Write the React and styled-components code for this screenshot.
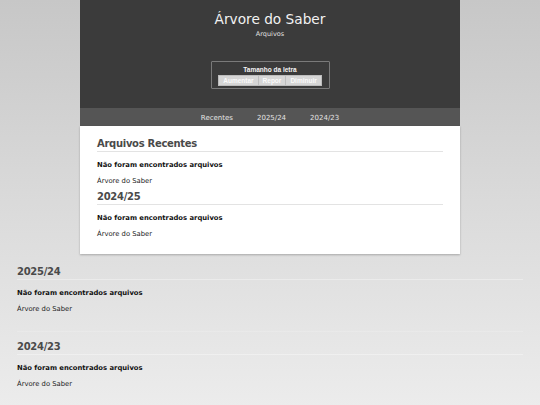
import React from "react";
import styled, { createGlobalStyle } from "styled-components";

const GlobalStyle = createGlobalStyle`
  html, body {
    margin: 0;
    padding: 0;
  }
  body {
    min-height: 405px;
    background: linear-gradient(to bottom, #c7c7c7 0%, #dcdcdc 55%, #ececec 100%);
    font-family: "DejaVu Sans", Verdana, sans-serif;
    color: #111;
  }
`;

const Page = styled.div`
  width: 100%;
  min-height: 405px;
`;

const Wrapper = styled.div`
  width: 380px;
  margin: 0 auto;
`;

const Header = styled.header`
  background: #3b3b3b;
  height: 108px;
  display: flex;
  flex-direction: column;
  align-items: center;
  padding-top: 11px;
  box-sizing: border-box;
`;

const Title = styled.h1`
  margin: 0;
  font-size: 13.7px;
  font-weight: normal;
  color: #f2f2f2;
  line-height: 17px;
`;

const Subtitle = styled.div`
  font-size: 6.5px;
  color: #e0e0e0;
  margin-top: 2px;
  line-height: 9px;
`;

const FontBox = styled.div`
  margin-top: 22px;
  border: 1px solid #7a7a7a;
  border-radius: 1px;
  padding: 3px 6px 2px;
  width: 119px;
  height: 28px;
  box-sizing: border-box;
  display: flex;
  flex-direction: column;
  align-items: center;
`;

const FontBoxLabel = styled.div`
  font-family: "Liberation Sans", Arial, sans-serif;
  font-weight: bold;
  font-size: 6.5px;
  color: #f4f4f4;
  line-height: 9px;
`;

const ButtonRow = styled.div`
  display: flex;
  margin-top: 1px;
`;

const SizeButton = styled.button`
  font-family: "Liberation Sans", Arial, sans-serif;
  font-weight: bold;
  font-size: 6.5px;
  color: #fafafa;
  background: #d6d6d6;
  border: 1px solid #bdbdbd;
  border-left-width: ${(p) => (p.$first ? "1px" : "0")};
  padding: 1px 4px;
  height: 11px;
  line-height: 8px;
  cursor: pointer;
`;

const Nav = styled.nav`
  background: #555555;
  height: 18px;
  box-sizing: border-box;
  padding-top: 2px;
  display: flex;
  justify-content: center;
  align-items: center;
  gap: 24px;
`;

const NavLink = styled.a`
  font-size: 7px;
  color: #e4e4e4;
  text-decoration: none;
`;

const Content = styled.main`
  background: #ffffff;
  padding: 11px 17px 15px;
  box-shadow: 0 1px 2px rgba(0, 0, 0, 0.25);
`;

const Section = styled.section`
  padding-bottom: ${(p) => (p.$outer ? "17px" : "0")};
  border-bottom: ${(p) => (p.$outer ? "1px solid rgba(255,255,255,0.18)" : "none")};
`;

const SectionTitle = styled.h2`
  margin: 0;
  font-size: 10px;
  font-weight: bold;
  color: #4a4a4a;
  line-height: 13px;
  padding-bottom: 1px;
  border-bottom: 1px solid ${(p) => (p.$outer ? "rgba(255,255,255,0.35)" : "#e3e3e3")};
  letter-spacing: -0.3px;
`;

const Empty = styled.p`
  margin: 9px 0 0;
  font-size: 6.8px;
  font-weight: bold;
  color: #111;
  line-height: 9px;
`;

const Owner = styled.p`
  margin: 7px 0 0;
  font-size: 6.8px;
  color: #222;
  line-height: 9px;
`;

const Outer = styled.div`
  padding: 11px 17px 0;
  display: flex;
  flex-direction: column;
  gap: 8px;
`;

const Spacer = styled.div`
  height: 4px;
`;

const Archive = ({ title, outer }) => (
  <Section $outer={outer}>
    <SectionTitle $outer={outer}>{title}</SectionTitle>
    <Empty>Não foram encontrados arquivos</Empty>
    <Owner>Árvore do Saber</Owner>
  </Section>
);

export default function App() {
  return (
    <Page>
      <GlobalStyle />
      <Wrapper>
        <Header>
          <Title>Árvore do Saber</Title>
          <Subtitle>Arquivos</Subtitle>
          <FontBox>
            <FontBoxLabel>Tamanho da letra</FontBoxLabel>
            <ButtonRow>
              <SizeButton $first>Aumentar</SizeButton>
              <SizeButton>Repor</SizeButton>
              <SizeButton>Diminuir</SizeButton>
            </ButtonRow>
          </FontBox>
        </Header>
        <Nav>
          <NavLink href="#recentes">Recentes</NavLink>
          <NavLink href="#2025">2025/24</NavLink>
          <NavLink href="#2024">2024/23</NavLink>
        </Nav>
        <Content>
          <Archive title="Arquivos Recentes" />
          <Spacer />
          <Archive title="2024/25" />
        </Content>
      </Wrapper>
      <Outer>
        <Archive title="2025/24" outer />
        <Archive title="2024/23" outer />
      </Outer>
    </Page>
  );
}
